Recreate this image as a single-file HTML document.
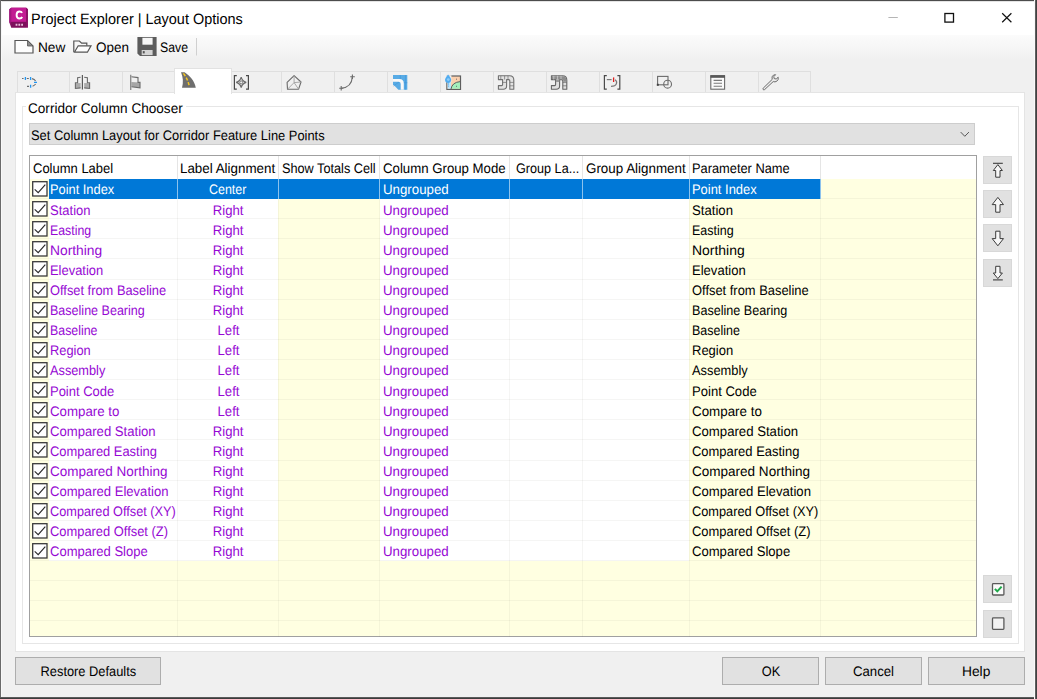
<!DOCTYPE html>
<html><head><meta charset="utf-8"><title>Project Explorer | Layout Options</title>
<style>
html,body{margin:0;padding:0;}
body{width:1037px;height:699px;position:relative;overflow:hidden;background:#f0f0f0;font-family:"Liberation Sans",sans-serif;}
.b{position:absolute;}
.t{position:absolute;white-space:nowrap;line-height:1;transform-origin:0 50%;}
svg{position:absolute;overflow:visible;}
</style></head><body>

<div class="b" style="left:0px;top:0px;width:1037px;height:35px;background:#ffffff;"></div>
<div class="b" style="left:0px;top:35px;width:1037px;height:25px;background:linear-gradient(#fbfbfb,#f6f6f6 50%,#f0f0f0);"></div>
<svg style="left:0;top:0" width="40" height="33" viewBox="0 0 40 33">
<path d="M9.3 9.3 L11.2 7.7 H26.2 L27.9 9.2 V27.5 H11.2 L9.3 22.4 Z" fill="#8e1269"/>
<path d="M9.3 9.3 L11.2 7.7 V21.9 L9.3 22.5 Z" fill="#a31680"/>
<rect x="11.2" y="7.7" width="15" height="14.2" fill="#c21b93"/>
<path d="M26.2 7.7 L27.9 9.2 V27.5 H26.2 Z" fill="#8a1166"/>
<rect x="11.2" y="21.9" width="15" height="5.6" fill="#7c0f5b"/>
<path d="M22.1 12.9 C21.6 11.9 20.6 11.5 19.5 11.5 C17.6 11.5 16.6 12.9 16.6 15 C16.6 17.1 17.6 18.5 19.5 18.5 C20.7 18.5 21.7 18 22.2 17" fill="none" stroke="#fff" stroke-width="1.9"/>
<path d="M15.6 24.7 H17.4 M18.4 24.7 H20.2 M21.2 24.7 H23" stroke="#e6bfd9" stroke-width="1.9"/>
</svg>
<span class="t " style="left:30.90px;top:11.20px;font-size:15px;color:#000;transform:rotate(0.03deg) scaleX(0.9629)">Project Explorer | Layout Options</span>
<svg style="left:0;top:0" width="1037" height="33">
<path d="M888.4 17.5 H897.8" stroke="#b5b5b5" stroke-width="1"/>
<rect x="944.9" y="13.5" width="8.6" height="8.6" fill="none" stroke="#111" stroke-width="1.3"/>
<path d="M1002.2 13.2 L1011.4 22.2 M1011.4 13.2 L1002.2 22.2" stroke="#111" stroke-width="1.2"/>
</svg>
<svg style="left:0;top:33px" width="220" height="28" viewBox="0 33 220 28">
<!-- New -->
<path d="M15 40.5 H27.5 L33 46 V53 H15 Z" fill="#fdfdfd" stroke="#555" stroke-width="1.2"/>
<path d="M27.5 40.5 L33 46 H27.5 Z" fill="#8a8a8a" stroke="#555" stroke-width="0.8"/>
<!-- Open -->
<path d="M73.8 52 V41 H79.4 L81.6 43.2 H86.8 V45.7" fill="none" stroke="#555" stroke-width="1.2"/>
<path d="M74.4 52.2 L78.2 45.8 H91 L87.4 52.2 Z" fill="#fdfdfd" stroke="#555" stroke-width="1.2"/>
<!-- Save -->
<path d="M137.4 37 H156.6 V55.9 H140 L137.4 53.4 Z" fill="#5c5c5c"/>
<rect x="142.4" y="37.8" width="10.2" height="6.9" fill="#f6f6f6"/>
<rect x="141.7" y="50" width="10.9" height="5.1" fill="#d4d4d4"/>
<rect x="142.8" y="51.1" width="1.9" height="2.3" fill="#555"/>
<!-- sep -->
<path d="M196.5 38 V55.5" stroke="#d0d0d0" stroke-width="1"/>
</svg>
<span class="t " style="left:37.70px;top:41.20px;font-size:13.8px;color:#000;transform:rotate(0.03deg) scaleX(0.9888)">New</span>
<span class="t " style="left:95.90px;top:41.20px;font-size:13.8px;color:#000;transform:rotate(0.03deg) scaleX(0.9774)">Open</span>
<span class="t " style="left:159.80px;top:41.20px;font-size:13.8px;color:#000;transform:rotate(0.03deg) scaleX(0.8901)">Save</span>
<div class="b" style="left:17px;top:71px;width:53px;height:23px;background:#f0f0f0;border:1px solid #dfdfdf;box-sizing:border-box;"></div>
<div class="b" style="left:69px;top:71px;width:54px;height:23px;background:#f0f0f0;border:1px solid #dfdfdf;box-sizing:border-box;"></div>
<div class="b" style="left:122px;top:71px;width:54px;height:23px;background:#f0f0f0;border:1px solid #dfdfdf;box-sizing:border-box;"></div>
<div class="b" style="left:228px;top:71px;width:54px;height:23px;background:#f0f0f0;border:1px solid #dfdfdf;box-sizing:border-box;"></div>
<div class="b" style="left:281px;top:71px;width:54px;height:23px;background:#f0f0f0;border:1px solid #dfdfdf;box-sizing:border-box;"></div>
<div class="b" style="left:334px;top:71px;width:54px;height:23px;background:#f0f0f0;border:1px solid #dfdfdf;box-sizing:border-box;"></div>
<div class="b" style="left:387px;top:71px;width:54px;height:23px;background:#f0f0f0;border:1px solid #dfdfdf;box-sizing:border-box;"></div>
<div class="b" style="left:440px;top:71px;width:54px;height:23px;background:#f0f0f0;border:1px solid #dfdfdf;box-sizing:border-box;"></div>
<div class="b" style="left:493px;top:71px;width:54px;height:23px;background:#f0f0f0;border:1px solid #dfdfdf;box-sizing:border-box;"></div>
<div class="b" style="left:546px;top:71px;width:54px;height:23px;background:#f0f0f0;border:1px solid #dfdfdf;box-sizing:border-box;"></div>
<div class="b" style="left:599px;top:71px;width:54px;height:23px;background:#f0f0f0;border:1px solid #dfdfdf;box-sizing:border-box;"></div>
<div class="b" style="left:652px;top:71px;width:54px;height:23px;background:#f0f0f0;border:1px solid #dfdfdf;box-sizing:border-box;"></div>
<div class="b" style="left:705px;top:71px;width:54px;height:23px;background:#f0f0f0;border:1px solid #dfdfdf;box-sizing:border-box;"></div>
<div class="b" style="left:758px;top:71px;width:53px;height:23px;background:#f0f0f0;border:1px solid #dfdfdf;box-sizing:border-box;"></div>
<div class="b" style="left:15px;top:92px;width:1010px;height:560px;background:#ffffff;border:1px solid #e4e4e4;box-sizing:border-box;"></div>
<div class="b" style="left:174px;top:68px;width:58px;height:26px;background:#ffffff;border:1px solid #e2e2e2;box-sizing:border-box;border-bottom:none;"></div>
<svg style="left:0;top:60px" width="830" height="36" viewBox="0 60 830 36" fill="none">
<!-- 1 dashed alignment -->
<g stroke="#6b6b6b" stroke-width="1.1">
<path d="M22 78.5 H23.6 M26.8 78.5 H28.8 M32 78.6 Q34.6 79.3 35.6 81 M35.6 84 Q34.6 85.4 32.6 86.2 M27 86.4 H29"/>
</g>
<g stroke="#2196f3" stroke-width="1.3">
<path d="M25.4 77 V80 M30.6 77 V80 M34 82.4 H37 M30.6 84.8 V87.8"/>
</g>
<!-- 2 mirrored sections -->
<g stroke="#6b6b6b" stroke-width="1.1">
<path d="M75.4 83.2 L80.6 82.9 V87.9 L75.4 88.5 Z" fill="#ababab" stroke="none"/>
<path d="M84.2 82.9 L89.6 83.2 V88.5 L84.2 87.9 Z" fill="#ababab" stroke="none"/>
<path d="M80.6 77.2 L77.6 77.8 V82.8 H75.4 V88.5 L80.6 87.9"/>
<path d="M84.2 77.2 L87.4 77.8 V82.8 H89.6 V88.5 L84.2 87.9"/>
<path d="M82.4 75 V89.6" stroke-width="1.2" stroke="#5a5a5a"/>
</g>
<!-- 3 section w/ line -->
<g stroke="#6b6b6b" stroke-width="1.1">
<path d="M131.4 82 L140 82.6 V87.8 L131.4 86.8 Z" fill="#a6a6a6" stroke="none"/>
<path d="M131.4 76.8 L138 77.6 V82.4 H140 V87.8 L131.4 86.8"/>
<path d="M130.7 74.7 V90" stroke-width="1.4" stroke="#8e8e8e"/>
</g>
<!-- 4 corridor (selected) -->
<path d="M181 72.2 H184.6 C190 75.8 194.6 81 195.8 87.7 H182 C183.6 82.4 183 77 181 72.2 Z" fill="#6e6e6e"/>
<path d="M183.4 73.4 C186.6 77.6 188.6 82 189.4 87.2" stroke="#f7c71c" stroke-width="1.5" stroke-dasharray="3.2 1.8"/>
<!-- 5 [star] -->
<g stroke="#6b6b6b" stroke-width="1.2">
<path d="M236.8 75.6 H234.4 V89.2 H236.8 M246 75.6 H248.4 V89.2 H246" stroke="#4a4a4a"/>
<path d="M241.2 77.2 Q242.2 81.4 246.2 82.4 Q242.2 83.4 241.2 87.6 Q240.2 83.4 236.2 82.4 Q240.2 81.4 241.2 77.2 Z" stroke-width="1.2"/>
<circle cx="241.2" cy="82.4" r="1.5" stroke-width="0.9"/>
</g>
<!-- 6 pentagon -->
<g stroke="#6b6b6b" stroke-width="1.1" stroke-linejoin="round">
<path d="M294.1 75.6 L301 82 L298.6 89.2 H287.5 L287.1 82.4 Z"/>
<path d="M294.1 75.6 V82.6 M294.1 82.6 L301 82 M294.1 82.6 L298.6 89.2 M294.1 82.6 L287.5 89.2" stroke="#a0a0a0" stroke-width="0.9"/>
</g>
<!-- 7 curve -->
<g stroke="#6b6b6b" stroke-width="1.1">
<path d="M341.2 88.2 Q351.6 87.6 352.4 76.8"/>
<path d="M339.2 88.2 H343.4 M341.2 86 V90.4 M350.2 76.8 H354.8 M352.4 74.6 V79"/>
</g>
<!-- 8 blue intersection -->
<path d="M393 75 H407.3 V89.7 H398.4 L393 84.3 Z" fill="#58abe5"/>
<path d="M400.3 75 V79.4 M404 82.7 H407.3 M405.4 75 V89.7 M393.4 86 L399 82" stroke="#3f93d6" stroke-width="0.6"/>
<path d="M393 79 H399.4 Q403.8 79 403.8 83.6 V89.7 H400.7 V84 Q400.7 81.7 398.6 81.7 H393 Z" fill="#f8f8f8"/>
<!-- 9 catchment -->
<rect x="446.9" y="76" width="13.6" height="13.4" fill="#fbd0ae" stroke="#5e5e5e" stroke-width="1.2"/>
<path d="M447.5 76.6 H451 V88.8 H447.5 Z" fill="#bfe4fa"/>
<path d="M451 88.8 Q452 82.2 460 81.6 V88.8 Z" fill="#a3efbc"/>
<path d="M450.9 89.3 Q452 82.2 460.4 81.6" stroke="#5e5e5e" stroke-width="1"/>
<path d="M446 75.2 H451.4 V82.2 H446 Z" fill="#f0f0f0"/>
<path d="M448.1 74.6 Q451.2 78.6 451.2 79.8 A3.1 3.1 0 0 1 445 79.8 Q445 78.6 448.1 74.6 Z" fill="#52acf0"/>
<circle cx="448.3" cy="79.6" r="1.4" fill="#8ccdfa"/>
<path d="M448.4 83.4 V86.6" stroke="#4aa6ea" stroke-width="1" stroke-dasharray="1.2 1"/>
<rect x="456.1" y="78.7" width="0.9" height="0.9" fill="#555"/><rect x="456.1" y="85.8" width="0.9" height="0.9" fill="#555"/>
<!-- 10 pipes light -->
<g stroke="#707070" stroke-width="1.1" fill="#e2e2e2" stroke-linejoin="round">
<path d="M498.4 75.8 H509.6 Q513.8 75.8 513.8 80 V89.2 H509.8 V80.8 Q509.8 79.6 508.6 79.6 H506.6 V86 Q506.6 89.2 503.2 89.2 H498.4 V85.6 H501.6 Q502.6 85.6 502.6 84.6 V79.6 H498.4 Z"/>
<path d="M500.8 75.8 V79.6 M504.6 75.8 V79.6 M508 75.8 V79.6 M509.8 82.4 H513.8 M509.8 85.8 H513.8 M502.6 82.4 H506.6" stroke-width="0.7" fill="none"/>
</g>
<!-- 11 pipes dark -->
<g stroke="#666" stroke-width="1.1" fill="#e0e0e0" stroke-linejoin="round">
<path d="M551.4 75.8 H562.6 Q566.8 75.8 566.8 80 V89.2 H562.8 V80.8 Q562.8 79.6 561.6 79.6 H559.6 V86 Q559.6 89.2 556.2 89.2 H551.4 V85.6 H554.6 Q555.6 85.6 555.6 84.6 V79.6 H551.4 Z"/>
<path d="M551.9 76.3 H562.6 Q566.3 76.3 566.3 80 V81.8 H563.3 V80.6 Q563.3 79.1 561.6 79.1 H551.9 Z" fill="#8c8c8c" stroke="none"/>
<path d="M555.9 79.2 V82 H559.3 V79.2 Z" fill="#9a9a9a" stroke="none"/>
<path d="M553.8 75.8 V79.6 M557.6 75.8 V79.6 M561 75.8 V79.6" stroke-width="0.7" fill="none" stroke="#d8d8d8"/>
<path d="M562.8 82.4 H566.8 M562.8 85.8 H566.8" stroke-width="0.7" fill="none"/>
</g>
<!-- 12 [ -| ) ] -->
<g stroke="#4a4a4a" stroke-width="1.2">
<path d="M606.8 75.6 H604.4 V89.2 H606.8 M617.4 75.6 H619.8 V89.2 H617.4"/>
<path d="M606.8 79.6 H611.6" stroke="#7a7a7a"/>
<path d="M613.6 77.4 V82" stroke="#e02020" stroke-width="1.3"/>
<path d="M615 79.8 Q617.4 81.2 616.4 83.8 Q615.4 86.4 611 86.4" stroke="#7a7a7a"/>
</g>
<!-- 13 rect+circle -->
<g stroke="#6b6b6b" stroke-width="1.1">
<rect x="657.6" y="76.4" width="10.4" height="8.4"/>
<circle cx="667.6" cy="84.2" r="3.9"/>
<rect x="656.8" y="83.8" width="2" height="2" fill="#444" stroke="none"/>
</g>
<!-- 14 list window -->
<g stroke="#6a6a6a" stroke-width="1.1">
<rect x="710.8" y="75.8" width="13.8" height="13.4" fill="#fafafa"/>
<rect x="710.4" y="75.2" width="14.6" height="2.6" fill="#585858" stroke="none"/>
<path d="M713.6 80.4 H722 M713.6 83.3 H722 M713.6 86.2 H722" stroke="#7a7a7a"/>
</g>
<!-- 15 wrench -->
<g stroke="#6b6b6b" stroke-width="1" fill="#ececec" stroke-linejoin="round">
<path d="M763.2 88.2 L772.2 79.4 Q771.2 76.4 773.6 75 Q774.6 74.5 775.6 74.7 L773.8 76.6 L774.2 78.6 L776.2 79 L778.2 77.2 Q778.8 79.8 776.8 81.2 Q775 82.4 773.2 81.6 L764.6 89.6 Q763.6 90 763 89.4 Q762.6 88.8 763.2 88.2 Z"/>
</g>
</svg>
<div class="b" style="left:22px;top:106px;width:997px;height:538px;border:1px solid #e6e6e6;box-sizing:border-box;"></div>
<div class="b" style="left:26px;top:100px;width:160px;height:14px;background:#ffffff;"></div>
<span class="t " style="left:27.90px;top:101.20px;font-size:14px;color:#000;transform:rotate(0.03deg) scaleX(0.9699)">Corridor Column Chooser</span>
<div class="b" style="left:29px;top:123px;width:946px;height:22px;background:#e1e1e1;border:1px solid #cdcdcd;box-sizing:border-box;"></div>
<span class="t " style="left:30.90px;top:129.20px;font-size:13.8px;color:#000;transform:rotate(0.03deg) scaleX(0.9338)">Set Column Layout for Corridor Feature Line Points</span>
<svg style="left:958px;top:130px" width="12" height="8"><path d="M2.7 2.1 L6.8 6.3 L10.9 2.1" fill="none" stroke="#555" stroke-width="1"/></svg>
<div class="b" style="left:29px;top:155px;width:948px;height:482px;background:#ffffe1;border:1px solid #a0a0a0;box-sizing:border-box;"></div>
<div class="b" style="left:30px;top:156px;width:946px;height:23px;background:#ffffff;"></div>
<div class="b" style="left:177px;top:156px;width:1px;height:23px;background:#e5e5e5;"></div>
<div class="b" style="left:278px;top:156px;width:1px;height:23px;background:#e5e5e5;"></div>
<div class="b" style="left:379px;top:156px;width:1px;height:23px;background:#e5e5e5;"></div>
<div class="b" style="left:509px;top:156px;width:1px;height:23px;background:#e5e5e5;"></div>
<div class="b" style="left:582px;top:156px;width:1px;height:23px;background:#e5e5e5;"></div>
<div class="b" style="left:689px;top:156px;width:1px;height:23px;background:#e5e5e5;"></div>
<div class="b" style="left:820px;top:156px;width:1px;height:23px;background:#e5e5e5;"></div>
<span class="t " style="left:32.50px;top:162.20px;font-size:13.8px;color:#000;transform:rotate(0.03deg) scaleX(0.9418)">Column Label</span>
<span class="t " style="left:180.00px;top:162.20px;font-size:13.8px;color:#000;transform:rotate(0.03deg) scaleX(0.9693)">Label Alignment</span>
<span class="t " style="left:282.00px;top:162.20px;font-size:13.8px;color:#000;transform:rotate(0.03deg) scaleX(0.9207)">Show Totals Cell</span>
<span class="t " style="left:383.30px;top:162.20px;font-size:13.8px;color:#000;transform:rotate(0.03deg) scaleX(0.9578)">Column Group Mode</span>
<span class="t " style="left:515.80px;top:162.20px;font-size:13.8px;color:#000;transform:rotate(0.03deg) scaleX(0.9153)">Group La...</span>
<span class="t " style="left:585.80px;top:162.20px;font-size:13.8px;color:#000;transform:rotate(0.03deg) scaleX(0.9698)">Group Alignment</span>
<span class="t " style="left:692.00px;top:162.20px;font-size:13.8px;color:#000;transform:rotate(0.03deg) scaleX(0.9298)">Parameter Name</span>
<div class="b" style="left:49px;top:179px;width:229px;height:382px;background:#ffffff;"></div>
<div class="b" style="left:380px;top:179px;width:309px;height:382px;background:#ffffff;"></div>
<div class="b" style="left:30px;top:198px;width:946px;height:1px;background:rgba(120,120,100,0.07);"></div>
<div class="b" style="left:30px;top:218px;width:946px;height:1px;background:rgba(120,120,100,0.07);"></div>
<div class="b" style="left:30px;top:238px;width:946px;height:1px;background:rgba(120,120,100,0.07);"></div>
<div class="b" style="left:30px;top:258px;width:946px;height:1px;background:rgba(120,120,100,0.07);"></div>
<div class="b" style="left:30px;top:279px;width:946px;height:1px;background:rgba(120,120,100,0.07);"></div>
<div class="b" style="left:30px;top:299px;width:946px;height:1px;background:rgba(120,120,100,0.07);"></div>
<div class="b" style="left:30px;top:319px;width:946px;height:1px;background:rgba(120,120,100,0.07);"></div>
<div class="b" style="left:30px;top:339px;width:946px;height:1px;background:rgba(120,120,100,0.07);"></div>
<div class="b" style="left:30px;top:359px;width:946px;height:1px;background:rgba(120,120,100,0.07);"></div>
<div class="b" style="left:30px;top:379px;width:946px;height:1px;background:rgba(120,120,100,0.07);"></div>
<div class="b" style="left:30px;top:399px;width:946px;height:1px;background:rgba(120,120,100,0.07);"></div>
<div class="b" style="left:30px;top:419px;width:946px;height:1px;background:rgba(120,120,100,0.07);"></div>
<div class="b" style="left:30px;top:439px;width:946px;height:1px;background:rgba(120,120,100,0.07);"></div>
<div class="b" style="left:30px;top:460px;width:946px;height:1px;background:rgba(120,120,100,0.07);"></div>
<div class="b" style="left:30px;top:480px;width:946px;height:1px;background:rgba(120,120,100,0.07);"></div>
<div class="b" style="left:30px;top:500px;width:946px;height:1px;background:rgba(120,120,100,0.07);"></div>
<div class="b" style="left:30px;top:520px;width:946px;height:1px;background:rgba(120,120,100,0.07);"></div>
<div class="b" style="left:30px;top:540px;width:946px;height:1px;background:rgba(120,120,100,0.07);"></div>
<div class="b" style="left:30px;top:560px;width:946px;height:1px;background:rgba(120,120,100,0.07);"></div>
<div class="b" style="left:30px;top:580px;width:946px;height:1px;background:rgba(120,120,100,0.07);"></div>
<div class="b" style="left:30px;top:600px;width:946px;height:1px;background:rgba(120,120,100,0.07);"></div>
<div class="b" style="left:30px;top:620px;width:946px;height:1px;background:rgba(120,120,100,0.07);"></div>
<div class="b" style="left:177px;top:179px;width:1px;height:458px;background:rgba(120,120,100,0.07);"></div>
<div class="b" style="left:278px;top:179px;width:1px;height:458px;background:rgba(120,120,100,0.07);"></div>
<div class="b" style="left:379px;top:179px;width:1px;height:458px;background:rgba(120,120,100,0.07);"></div>
<div class="b" style="left:509px;top:179px;width:1px;height:458px;background:rgba(120,120,100,0.07);"></div>
<div class="b" style="left:582px;top:179px;width:1px;height:458px;background:rgba(120,120,100,0.07);"></div>
<div class="b" style="left:689px;top:179px;width:1px;height:458px;background:rgba(120,120,100,0.07);"></div>
<div class="b" style="left:820px;top:179px;width:1px;height:458px;background:rgba(120,120,100,0.07);"></div>
<div class="b" style="left:49px;top:179px;width:772px;height:20px;background:#0078d7;"></div>
<div class="b" style="left:177px;top:179px;width:1px;height:20px;background:rgba(255,255,255,0.55);"></div>
<div class="b" style="left:278px;top:179px;width:1px;height:20px;background:rgba(255,255,255,0.55);"></div>
<div class="b" style="left:379px;top:179px;width:1px;height:20px;background:rgba(255,255,255,0.55);"></div>
<div class="b" style="left:509px;top:179px;width:1px;height:20px;background:rgba(255,255,255,0.55);"></div>
<div class="b" style="left:582px;top:179px;width:1px;height:20px;background:rgba(255,255,255,0.55);"></div>
<div class="b" style="left:689px;top:179px;width:1px;height:20px;background:rgba(255,255,255,0.55);"></div>
<div class="b" style="left:820px;top:179px;width:1px;height:20px;background:rgba(255,255,255,0.55);"></div>
<svg style="left:32px;top:181px" width="16" height="16"><rect x="0.7" y="0.7" width="14.3" height="14.3" fill="#fff" stroke="#3a3a3a" stroke-width="1.3"/><path d="M2.7 8.3 L6.2 11.7 L13.3 3.7" fill="none" stroke="#2a2a2a" stroke-width="1.15"/></svg>
<span class="t n" style="left:49.50px;top:183.20px;font-size:13.8px;color:#ffffff;transform:rotate(0.03deg) scaleX(0.9297)">Point Index</span>
<span class="t " style="left:207.49px;top:183.20px;font-size:13.8px;color:#ffffff;transform-origin:50% 50%;transform:rotate(0.03deg) scaleX(0.9041)">Center</span>
<span class="t " style="left:383.20px;top:183.20px;font-size:13.8px;color:#ffffff;transform:rotate(0.03deg) scaleX(0.9620)">Ungrouped</span>
<span class="t n" style="left:691.50px;top:183.20px;font-size:13.8px;color:#ffffff;transform:rotate(0.03deg) scaleX(0.9369)">Point Index</span>
<svg style="left:32px;top:201px" width="16" height="16"><rect x="0.7" y="0.7" width="14.3" height="14.3" fill="#fff" stroke="#3a3a3a" stroke-width="1.3"/><path d="M2.7 8.3 L6.2 11.7 L13.3 3.7" fill="none" stroke="#2a2a2a" stroke-width="1.15"/></svg>
<span class="t n" style="left:49.50px;top:204.20px;font-size:13.8px;color:#9608d4;transform:rotate(0.03deg) scaleX(0.9426)">Station</span>
<span class="t " style="left:212.09px;top:204.20px;font-size:13.8px;color:#9608d4;transform-origin:50% 50%;transform:rotate(0.03deg) scaleX(0.9529)">Right</span>
<span class="t " style="left:383.20px;top:204.20px;font-size:13.8px;color:#9608d4;transform:rotate(0.03deg) scaleX(0.9620)">Ungrouped</span>
<span class="t n" style="left:691.50px;top:204.20px;font-size:13.8px;color:#000000;transform:rotate(0.03deg) scaleX(0.9542)">Station</span>
<svg style="left:32px;top:221px" width="16" height="16"><rect x="0.7" y="0.7" width="14.3" height="14.3" fill="#fff" stroke="#3a3a3a" stroke-width="1.3"/><path d="M2.7 8.3 L6.2 11.7 L13.3 3.7" fill="none" stroke="#2a2a2a" stroke-width="1.15"/></svg>
<span class="t n" style="left:49.50px;top:224.20px;font-size:13.8px;color:#9608d4;transform:rotate(0.03deg) scaleX(0.8950)">Easting</span>
<span class="t " style="left:212.09px;top:224.20px;font-size:13.8px;color:#9608d4;transform-origin:50% 50%;transform:rotate(0.03deg) scaleX(0.9529)">Right</span>
<span class="t " style="left:383.20px;top:224.20px;font-size:13.8px;color:#9608d4;transform:rotate(0.03deg) scaleX(0.9620)">Ungrouped</span>
<span class="t n" style="left:691.50px;top:224.20px;font-size:13.8px;color:#000000;transform:rotate(0.03deg) scaleX(0.9059)">Easting</span>
<svg style="left:32px;top:241px" width="16" height="16"><rect x="0.7" y="0.7" width="14.3" height="14.3" fill="#fff" stroke="#3a3a3a" stroke-width="1.3"/><path d="M2.7 8.3 L6.2 11.7 L13.3 3.7" fill="none" stroke="#2a2a2a" stroke-width="1.15"/></svg>
<span class="t n" style="left:49.50px;top:244.20px;font-size:13.8px;color:#9608d4;transform:rotate(0.03deg) scaleX(1.0007)">Northing</span>
<span class="t " style="left:212.09px;top:244.20px;font-size:13.8px;color:#9608d4;transform-origin:50% 50%;transform:rotate(0.03deg) scaleX(0.9529)">Right</span>
<span class="t " style="left:383.20px;top:244.20px;font-size:13.8px;color:#9608d4;transform:rotate(0.03deg) scaleX(0.9620)">Ungrouped</span>
<span class="t n" style="left:691.50px;top:244.20px;font-size:13.8px;color:#000000;transform:rotate(0.03deg) scaleX(1.0102)">Northing</span>
<svg style="left:32px;top:261px" width="16" height="16"><rect x="0.7" y="0.7" width="14.3" height="14.3" fill="#fff" stroke="#3a3a3a" stroke-width="1.3"/><path d="M2.7 8.3 L6.2 11.7 L13.3 3.7" fill="none" stroke="#2a2a2a" stroke-width="1.15"/></svg>
<span class="t n" style="left:49.50px;top:264.20px;font-size:13.8px;color:#9608d4;transform:rotate(0.03deg) scaleX(0.9370)">Elevation</span>
<span class="t " style="left:212.09px;top:264.20px;font-size:13.8px;color:#9608d4;transform-origin:50% 50%;transform:rotate(0.03deg) scaleX(0.9529)">Right</span>
<span class="t " style="left:383.20px;top:264.20px;font-size:13.8px;color:#9608d4;transform:rotate(0.03deg) scaleX(0.9620)">Ungrouped</span>
<span class="t n" style="left:691.50px;top:264.20px;font-size:13.8px;color:#000000;transform:rotate(0.03deg) scaleX(0.9458)">Elevation</span>
<svg style="left:32px;top:282px" width="16" height="16"><rect x="0.7" y="0.7" width="14.3" height="14.3" fill="#fff" stroke="#3a3a3a" stroke-width="1.3"/><path d="M2.7 8.3 L6.2 11.7 L13.3 3.7" fill="none" stroke="#2a2a2a" stroke-width="1.15"/></svg>
<span class="t n" style="left:49.50px;top:284.20px;font-size:13.8px;color:#9608d4;transform:rotate(0.03deg) scaleX(0.9313)">Offset from Baseline</span>
<span class="t " style="left:212.09px;top:284.20px;font-size:13.8px;color:#9608d4;transform-origin:50% 50%;transform:rotate(0.03deg) scaleX(0.9529)">Right</span>
<span class="t " style="left:383.20px;top:284.20px;font-size:13.8px;color:#9608d4;transform:rotate(0.03deg) scaleX(0.9620)">Ungrouped</span>
<span class="t n" style="left:691.50px;top:284.20px;font-size:13.8px;color:#000000;transform:rotate(0.03deg) scaleX(0.9353)">Offset from Baseline</span>
<svg style="left:32px;top:302px" width="16" height="16"><rect x="0.7" y="0.7" width="14.3" height="14.3" fill="#fff" stroke="#3a3a3a" stroke-width="1.3"/><path d="M2.7 8.3 L6.2 11.7 L13.3 3.7" fill="none" stroke="#2a2a2a" stroke-width="1.15"/></svg>
<span class="t n" style="left:49.50px;top:304.20px;font-size:13.8px;color:#9608d4;transform:rotate(0.03deg) scaleX(0.9085)">Baseline Bearing</span>
<span class="t " style="left:212.09px;top:304.20px;font-size:13.8px;color:#9608d4;transform-origin:50% 50%;transform:rotate(0.03deg) scaleX(0.9529)">Right</span>
<span class="t " style="left:383.20px;top:304.20px;font-size:13.8px;color:#9608d4;transform:rotate(0.03deg) scaleX(0.9620)">Ungrouped</span>
<span class="t n" style="left:691.50px;top:304.20px;font-size:13.8px;color:#000000;transform:rotate(0.03deg) scaleX(0.9133)">Baseline Bearing</span>
<svg style="left:32px;top:322px" width="16" height="16"><rect x="0.7" y="0.7" width="14.3" height="14.3" fill="#fff" stroke="#3a3a3a" stroke-width="1.3"/><path d="M2.7 8.3 L6.2 11.7 L13.3 3.7" fill="none" stroke="#2a2a2a" stroke-width="1.15"/></svg>
<span class="t n" style="left:49.50px;top:324.20px;font-size:13.8px;color:#9608d4;transform:rotate(0.03deg) scaleX(0.8972)">Baseline</span>
<span class="t " style="left:216.69px;top:324.20px;font-size:13.8px;color:#9608d4;transform-origin:50% 50%;transform:rotate(0.03deg) scaleX(0.9513)">Left</span>
<span class="t " style="left:383.20px;top:324.20px;font-size:13.8px;color:#9608d4;transform:rotate(0.03deg) scaleX(0.9620)">Ungrouped</span>
<span class="t n" style="left:691.50px;top:324.20px;font-size:13.8px;color:#000000;transform:rotate(0.03deg) scaleX(0.9067)">Baseline</span>
<svg style="left:32px;top:342px" width="16" height="16"><rect x="0.7" y="0.7" width="14.3" height="14.3" fill="#fff" stroke="#3a3a3a" stroke-width="1.3"/><path d="M2.7 8.3 L6.2 11.7 L13.3 3.7" fill="none" stroke="#2a2a2a" stroke-width="1.15"/></svg>
<span class="t n" style="left:49.50px;top:344.20px;font-size:13.8px;color:#9608d4;transform:rotate(0.03deg) scaleX(0.9306)">Region</span>
<span class="t " style="left:216.69px;top:344.20px;font-size:13.8px;color:#9608d4;transform-origin:50% 50%;transform:rotate(0.03deg) scaleX(0.9513)">Left</span>
<span class="t " style="left:383.20px;top:344.20px;font-size:13.8px;color:#9608d4;transform:rotate(0.03deg) scaleX(0.9620)">Ungrouped</span>
<span class="t n" style="left:691.50px;top:344.20px;font-size:13.8px;color:#000000;transform:rotate(0.03deg) scaleX(0.9420)">Region</span>
<svg style="left:32px;top:362px" width="16" height="16"><rect x="0.7" y="0.7" width="14.3" height="14.3" fill="#fff" stroke="#3a3a3a" stroke-width="1.3"/><path d="M2.7 8.3 L6.2 11.7 L13.3 3.7" fill="none" stroke="#2a2a2a" stroke-width="1.15"/></svg>
<span class="t n" style="left:49.50px;top:364.20px;font-size:13.8px;color:#9608d4;transform:rotate(0.03deg) scaleX(0.9245)">Assembly</span>
<span class="t " style="left:216.69px;top:364.20px;font-size:13.8px;color:#9608d4;transform-origin:50% 50%;transform:rotate(0.03deg) scaleX(0.9513)">Left</span>
<span class="t " style="left:383.20px;top:364.20px;font-size:13.8px;color:#9608d4;transform:rotate(0.03deg) scaleX(0.9620)">Ungrouped</span>
<span class="t n" style="left:691.50px;top:364.20px;font-size:13.8px;color:#000000;transform:rotate(0.03deg) scaleX(0.9328)">Assembly</span>
<svg style="left:32px;top:382px" width="16" height="16"><rect x="0.7" y="0.7" width="14.3" height="14.3" fill="#fff" stroke="#3a3a3a" stroke-width="1.3"/><path d="M2.7 8.3 L6.2 11.7 L13.3 3.7" fill="none" stroke="#2a2a2a" stroke-width="1.15"/></svg>
<span class="t n" style="left:49.50px;top:385.20px;font-size:13.8px;color:#9608d4;transform:rotate(0.03deg) scaleX(0.9402)">Point Code</span>
<span class="t " style="left:216.69px;top:385.20px;font-size:13.8px;color:#9608d4;transform-origin:50% 50%;transform:rotate(0.03deg) scaleX(0.9513)">Left</span>
<span class="t " style="left:383.20px;top:385.20px;font-size:13.8px;color:#9608d4;transform:rotate(0.03deg) scaleX(0.9620)">Ungrouped</span>
<span class="t n" style="left:691.50px;top:385.20px;font-size:13.8px;color:#000000;transform:rotate(0.03deg) scaleX(0.9475)">Point Code</span>
<svg style="left:32px;top:402px" width="16" height="16"><rect x="0.7" y="0.7" width="14.3" height="14.3" fill="#fff" stroke="#3a3a3a" stroke-width="1.3"/><path d="M2.7 8.3 L6.2 11.7 L13.3 3.7" fill="none" stroke="#2a2a2a" stroke-width="1.15"/></svg>
<span class="t n" style="left:49.50px;top:405.20px;font-size:13.8px;color:#9608d4;transform:rotate(0.03deg) scaleX(0.9625)">Compare to</span>
<span class="t " style="left:216.69px;top:405.20px;font-size:13.8px;color:#9608d4;transform-origin:50% 50%;transform:rotate(0.03deg) scaleX(0.9513)">Left</span>
<span class="t " style="left:383.20px;top:405.20px;font-size:13.8px;color:#9608d4;transform:rotate(0.03deg) scaleX(0.9620)">Ungrouped</span>
<span class="t n" style="left:691.50px;top:405.20px;font-size:13.8px;color:#000000;transform:rotate(0.03deg) scaleX(0.9694)">Compare to</span>
<svg style="left:32px;top:422px" width="16" height="16"><rect x="0.7" y="0.7" width="14.3" height="14.3" fill="#fff" stroke="#3a3a3a" stroke-width="1.3"/><path d="M2.7 8.3 L6.2 11.7 L13.3 3.7" fill="none" stroke="#2a2a2a" stroke-width="1.15"/></svg>
<span class="t n" style="left:49.50px;top:425.20px;font-size:13.8px;color:#9608d4;transform:rotate(0.03deg) scaleX(0.9502)">Compared Station</span>
<span class="t " style="left:212.09px;top:425.20px;font-size:13.8px;color:#9608d4;transform-origin:50% 50%;transform:rotate(0.03deg) scaleX(0.9529)">Right</span>
<span class="t " style="left:383.20px;top:425.20px;font-size:13.8px;color:#9608d4;transform:rotate(0.03deg) scaleX(0.9620)">Ungrouped</span>
<span class="t n" style="left:691.50px;top:425.20px;font-size:13.8px;color:#000000;transform:rotate(0.03deg) scaleX(0.9547)">Compared Station</span>
<svg style="left:32px;top:442px" width="16" height="16"><rect x="0.7" y="0.7" width="14.3" height="14.3" fill="#fff" stroke="#3a3a3a" stroke-width="1.3"/><path d="M2.7 8.3 L6.2 11.7 L13.3 3.7" fill="none" stroke="#2a2a2a" stroke-width="1.15"/></svg>
<span class="t n" style="left:49.50px;top:445.20px;font-size:13.8px;color:#9608d4;transform:rotate(0.03deg) scaleX(0.9352)">Compared Easting</span>
<span class="t " style="left:212.09px;top:445.20px;font-size:13.8px;color:#9608d4;transform-origin:50% 50%;transform:rotate(0.03deg) scaleX(0.9529)">Right</span>
<span class="t " style="left:383.20px;top:445.20px;font-size:13.8px;color:#9608d4;transform:rotate(0.03deg) scaleX(0.9620)">Ungrouped</span>
<span class="t n" style="left:691.50px;top:445.20px;font-size:13.8px;color:#000000;transform:rotate(0.03deg) scaleX(0.9396)">Compared Easting</span>
<svg style="left:32px;top:463px" width="16" height="16"><rect x="0.7" y="0.7" width="14.3" height="14.3" fill="#fff" stroke="#3a3a3a" stroke-width="1.3"/><path d="M2.7 8.3 L6.2 11.7 L13.3 3.7" fill="none" stroke="#2a2a2a" stroke-width="1.15"/></svg>
<span class="t n" style="left:49.50px;top:465.20px;font-size:13.8px;color:#9608d4;transform:rotate(0.03deg) scaleX(0.9756)">Compared Northing</span>
<span class="t " style="left:212.09px;top:465.20px;font-size:13.8px;color:#9608d4;transform-origin:50% 50%;transform:rotate(0.03deg) scaleX(0.9529)">Right</span>
<span class="t " style="left:383.20px;top:465.20px;font-size:13.8px;color:#9608d4;transform:rotate(0.03deg) scaleX(0.9620)">Ungrouped</span>
<span class="t n" style="left:691.50px;top:465.20px;font-size:13.8px;color:#000000;transform:rotate(0.03deg) scaleX(0.9798)">Compared Northing</span>
<svg style="left:32px;top:483px" width="16" height="16"><rect x="0.7" y="0.7" width="14.3" height="14.3" fill="#fff" stroke="#3a3a3a" stroke-width="1.3"/><path d="M2.7 8.3 L6.2 11.7 L13.3 3.7" fill="none" stroke="#2a2a2a" stroke-width="1.15"/></svg>
<span class="t n" style="left:49.50px;top:485.20px;font-size:13.8px;color:#9608d4;transform:rotate(0.03deg) scaleX(0.9476)">Compared Elevation</span>
<span class="t " style="left:212.09px;top:485.20px;font-size:13.8px;color:#9608d4;transform-origin:50% 50%;transform:rotate(0.03deg) scaleX(0.9529)">Right</span>
<span class="t " style="left:383.20px;top:485.20px;font-size:13.8px;color:#9608d4;transform:rotate(0.03deg) scaleX(0.9620)">Ungrouped</span>
<span class="t n" style="left:691.50px;top:485.20px;font-size:13.8px;color:#000000;transform:rotate(0.03deg) scaleX(0.9516)">Compared Elevation</span>
<svg style="left:32px;top:503px" width="16" height="16"><rect x="0.7" y="0.7" width="14.3" height="14.3" fill="#fff" stroke="#3a3a3a" stroke-width="1.3"/><path d="M2.7 8.3 L6.2 11.7 L13.3 3.7" fill="none" stroke="#2a2a2a" stroke-width="1.15"/></svg>
<span class="t n" style="left:49.50px;top:505.20px;font-size:13.8px;color:#9608d4;transform:rotate(0.03deg) scaleX(0.9232)">Compared Offset (XY)</span>
<span class="t " style="left:212.09px;top:505.20px;font-size:13.8px;color:#9608d4;transform-origin:50% 50%;transform:rotate(0.03deg) scaleX(0.9529)">Right</span>
<span class="t " style="left:383.20px;top:505.20px;font-size:13.8px;color:#9608d4;transform:rotate(0.03deg) scaleX(0.9620)">Ungrouped</span>
<span class="t n" style="left:691.50px;top:505.20px;font-size:13.8px;color:#000000;transform:rotate(0.03deg) scaleX(0.9269)">Compared Offset (XY)</span>
<svg style="left:32px;top:523px" width="16" height="16"><rect x="0.7" y="0.7" width="14.3" height="14.3" fill="#fff" stroke="#3a3a3a" stroke-width="1.3"/><path d="M2.7 8.3 L6.2 11.7 L13.3 3.7" fill="none" stroke="#2a2a2a" stroke-width="1.15"/></svg>
<span class="t n" style="left:49.50px;top:525.20px;font-size:13.8px;color:#9608d4;transform:rotate(0.03deg) scaleX(0.9344)">Compared Offset (Z)</span>
<span class="t " style="left:212.09px;top:525.20px;font-size:13.8px;color:#9608d4;transform-origin:50% 50%;transform:rotate(0.03deg) scaleX(0.9529)">Right</span>
<span class="t " style="left:383.20px;top:525.20px;font-size:13.8px;color:#9608d4;transform:rotate(0.03deg) scaleX(0.9620)">Ungrouped</span>
<span class="t n" style="left:691.50px;top:525.20px;font-size:13.8px;color:#000000;transform:rotate(0.03deg) scaleX(0.9383)">Compared Offset (Z)</span>
<svg style="left:32px;top:543px" width="16" height="16"><rect x="0.7" y="0.7" width="14.3" height="14.3" fill="#fff" stroke="#3a3a3a" stroke-width="1.3"/><path d="M2.7 8.3 L6.2 11.7 L13.3 3.7" fill="none" stroke="#2a2a2a" stroke-width="1.15"/></svg>
<span class="t n" style="left:49.50px;top:545.20px;font-size:13.8px;color:#9608d4;transform:rotate(0.03deg) scaleX(0.9433)">Compared Slope</span>
<span class="t " style="left:212.09px;top:545.20px;font-size:13.8px;color:#9608d4;transform-origin:50% 50%;transform:rotate(0.03deg) scaleX(0.9529)">Right</span>
<span class="t " style="left:383.20px;top:545.20px;font-size:13.8px;color:#9608d4;transform:rotate(0.03deg) scaleX(0.9620)">Ungrouped</span>
<span class="t n" style="left:691.50px;top:545.20px;font-size:13.8px;color:#000000;transform:rotate(0.03deg) scaleX(0.9481)">Compared Slope</span>
<div class="b" style="left:983px;top:156px;width:29px;height:28px;background:#e1e1e1;border:1px solid #d8d8d8;box-sizing:border-box;"></div>
<svg style="left:984px;top:156px" width="28" height="28"><path d="M9 7.3 H18.8" stroke="#3c3c3c" stroke-width="1.1"/><path d="M13.85 8.6 L18.4 14.5 H16 V21.2 H11.7 V14.5 H9.3 Z" fill="#f8f8f8" stroke="#3c3c3c" stroke-width="1" stroke-linejoin="miter"/></svg>
<div class="b" style="left:983px;top:190px;width:29px;height:28px;background:#e1e1e1;border:1px solid #d8d8d8;box-sizing:border-box;"></div>
<svg style="left:984px;top:190px" width="28" height="28"><path d="M13.85 7.4 L19.5 14.6 H16 V22.2 H11.7 V14.6 H8.2 Z" fill="#f8f8f8" stroke="#3c3c3c" stroke-width="1" stroke-linejoin="miter"/></svg>
<div class="b" style="left:983px;top:224px;width:29px;height:28px;background:#e1e1e1;border:1px solid #d8d8d8;box-sizing:border-box;"></div>
<svg style="left:984px;top:224px" width="28" height="28"><path d="M13.85 21.8 L19.5 14.6 H16 V7.2 H11.7 V14.6 H8.2 Z" fill="#f8f8f8" stroke="#3c3c3c" stroke-width="1" stroke-linejoin="miter"/></svg>
<div class="b" style="left:983px;top:259px;width:29px;height:28px;background:#e1e1e1;border:1px solid #d8d8d8;box-sizing:border-box;"></div>
<svg style="left:984px;top:259px" width="28" height="28"><path d="M9 20.9 H18.8" stroke="#3c3c3c" stroke-width="1.1"/><path d="M13.85 19.6 L18.4 14 H16 V7.3 H11.7 V14 H9.3 Z" fill="#f8f8f8" stroke="#3c3c3c" stroke-width="1" stroke-linejoin="miter"/></svg>
<div class="b" style="left:983px;top:575px;width:29px;height:28px;background:#e1e1e1;border:1px solid #d8d8d8;box-sizing:border-box;"></div>
<svg style="left:984px;top:575px" width="28" height="28"><rect x="8.5" y="8.6" width="11.4" height="11.4" rx="0.8" fill="#fafafa" stroke="#5a5a5a" stroke-width="1.3"/><path d="M10.9 13.9 L13.3 16.4 L17.6 11.6" fill="none" stroke="#1fa84a" stroke-width="2"/></svg>
<div class="b" style="left:983px;top:610px;width:29px;height:28px;background:#e1e1e1;border:1px solid #d8d8d8;box-sizing:border-box;"></div>
<svg style="left:984px;top:610px" width="28" height="28"><rect x="8.5" y="7.9" width="11.4" height="11.4" rx="0.8" fill="#f2f2f2" stroke="#5a5a5a" stroke-width="1.3"/></svg>
<div class="b" style="left:15px;top:657px;width:146px;height:28px;background:#e1e1e1;border:1px solid #adadad;box-sizing:border-box;"></div>
<span class="t " style="left:36.61px;top:665.20px;font-size:13.8px;color:#000;transform-origin:50% 50%;transform:rotate(0.03deg) scaleX(0.9311)">Restore Defaults</span>
<div class="b" style="left:722px;top:657px;width:97px;height:28px;background:#e1e1e1;border:1px solid #adadad;box-sizing:border-box;"></div>
<span class="t " style="left:760.53px;top:665.20px;font-size:13.8px;color:#000;transform-origin:50% 50%;transform:rotate(0.03deg) scaleX(0.9278)">OK</span>
<div class="b" style="left:825px;top:657px;width:97px;height:28px;background:#e1e1e1;border:1px solid #adadad;box-sizing:border-box;"></div>
<span class="t " style="left:852.02px;top:665.20px;font-size:13.8px;color:#000;transform-origin:50% 50%;transform:rotate(0.03deg) scaleX(0.9567)">Cancel</span>
<div class="b" style="left:928px;top:657px;width:97px;height:28px;background:#e1e1e1;border:1px solid #adadad;box-sizing:border-box;"></div>
<span class="t " style="left:962.31px;top:665.20px;font-size:13.8px;color:#000;transform-origin:50% 50%;transform:rotate(0.03deg) scaleX(0.9970)">Help</span>
<div class="b" style="left:0px;top:0px;width:1037px;height:1px;background:#4c4c4c;"></div>
<div class="b" style="left:1px;top:1px;width:1033px;height:1px;background:#e4e4e4;"></div>
<div class="b" style="left:0px;top:0px;width:1px;height:699px;background:#6a6a6a;"></div>
<div class="b" style="left:1px;top:1px;width:1px;height:696px;background:#f8f8f8;"></div>
<div class="b" style="left:0px;top:697px;width:1037px;height:2px;background:linear-gradient(#6a6a6a,#2c2c2c);"></div>
<div class="b" style="left:1034px;top:0px;width:1px;height:699px;background:#fafafa;"></div>
<div class="b" style="left:1035px;top:0px;width:2px;height:699px;background:linear-gradient(90deg,#6e6e6e,#333);"></div>
</body></html>
